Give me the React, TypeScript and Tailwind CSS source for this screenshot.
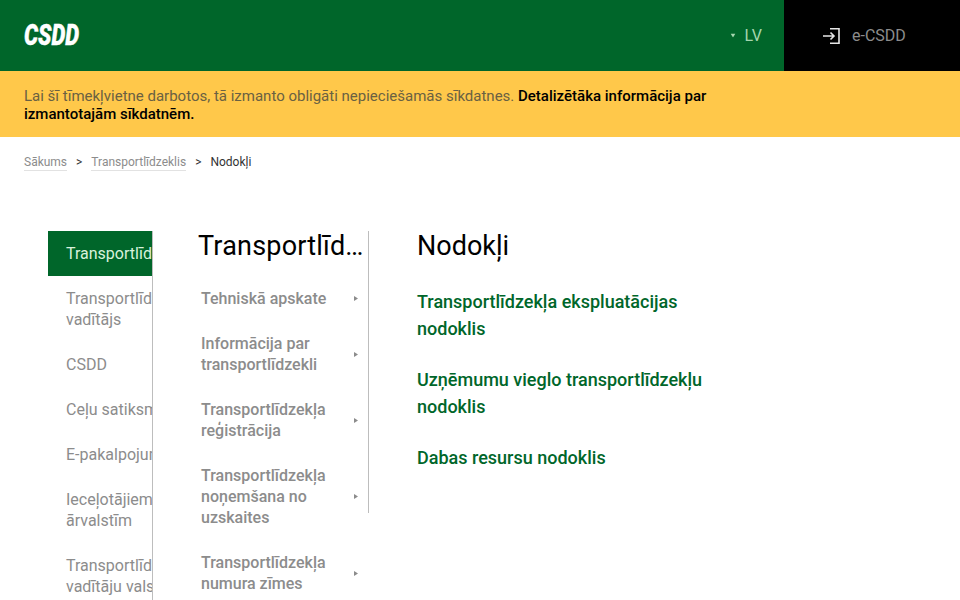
const mainNav = [
  { label: 'Transportlīdzeklis', active: true },
  { label: 'Transportlīdzekļa vadītājs' },
  { label: 'CSDD' },
  { label: 'Ceļu satiksme' },
  { label: 'E-pakalpojumi' },
  { label: 'Ieceļotājiem no ārvalstīm' },
  { label: 'Transportlīdzekļu vadītāju valsts' },
];

const subNav = [
  'Tehniskā apskate',
  'Informācija par transportlīdzekli',
  'Transportlīdzekļa reģistrācija',
  'Transportlīdzekļa noņemšana no uzskaites',
  'Transportlīdzekļa numura zīmes',
];

const links = [
  'Transportlīdzekļa ekspluatācijas nodoklis',
  'Uzņēmumu vieglo transportlīdzekļu nodoklis',
  'Dabas resursu nodoklis',
];

function Caret({ className }: { className: string }) {
  return (
    <svg className={className} viewBox="0 0 4 5" fill="currentColor">
      <path d="M0 0 L4 2.5 L0 5 Z" />
    </svg>
  );
}

export default function App() {
  return (
    <div className="h-screen overflow-hidden bg-white font-['Roboto',sans-serif]">
      <header className="flex h-[71px] bg-[#00662a]">
        <div className="flex flex-1 items-center justify-between pl-6">
          <span className="origin-left scale-x-[0.76] text-[29px] font-black italic leading-none text-white [-webkit-text-stroke:0.4px_white]">CSDD</span>
          <div className="mr-[22px] flex items-center gap-[10px] text-base text-[#a5d6ae]">
            <Caret className="h-[5px] w-[4px] rotate-90" />
            <span>LV</span>
          </div>
        </div>
        <div className="flex w-[176px] items-center bg-black pl-[39px]">
          <svg className="h-[16px] w-[17px] text-[#e6e6e6]" viewBox="0 0 17 16" fill="none" stroke="currentColor" strokeWidth="1.6">
            <path d="M7 .8 H16 V15.2 H7" />
            <path d="M0 8 H11 M7.5 4.5 L11 8 L7.5 11.5" />
          </svg>
          <span className="ml-[12px] text-base text-[#8c8c8c]">e-CSDD</span>
        </div>
      </header>

      <div className="h-[66px] bg-[#ffc84a] px-6 pt-[16px] text-[15px] leading-[18px] text-[#6a6142]">
        <p className="w-[720px]">
          Lai šī tīmekļvietne darbotos, tā izmanto obligāti nepieciešamās sīkdatnes.{' '}
          <a className="font-medium text-black">Detalizētāka informācija par izmantotajām sīkdatnēm.</a>
        </p>
      </div>

      <nav className="flex h-[94px] items-start gap-[9px] px-6 pt-[17px] text-xs leading-[16px] text-[#333]">
        <a className="border-b border-[#e2e2e2] text-[#8c8c8c]">Sākums</a>
        <span>&gt;</span>
        <a className="border-b border-[#e2e2e2] text-[#8c8c8c]">Transportlīdzeklis</a>
        <span>&gt;</span>
        <span>Nodokļi</span>
      </nav>

      <main className="flex items-start pl-12">
        <ul className="h-[400px] w-[105px] shrink-0 overflow-hidden border-r border-[#bdbdbd] text-base leading-[21px] text-[#8c8c8c]">
          {mainNav.map((item) => (
            <li
              key={item.label}
              className={`w-[180px] py-3 pl-[18px] ${item.active ? 'whitespace-nowrap bg-[#00662a] text-[#d9f2dc]' : ''}`}
            >
              {item.label}
            </li>
          ))}
        </ul>

        <div className="h-[282px] w-[216px] shrink-0 border-r border-[#bdbdbd]">
          <h2 className="truncate pl-[45px] pr-[4px] text-[27px] leading-[30px] tracking-[0.2px] text-black">Transportlīdzeklis</h2>
          <ul className="w-[216px] pt-[15px] text-base font-medium leading-[21px] text-[#8c8c8c]">
            {subNav.map((item) => (
              <li key={item} className="flex items-center justify-between py-3 pl-12 pr-[11px]">
                <span className="w-[136px]">{item}</span>
                <Caret className="h-[5px] w-[4px] text-[#8c8c8c]" />
              </li>
            ))}
          </ul>
        </div>

        <div className="ml-12 w-[300px]">
          <h1 className="text-[27px] leading-[30px] text-black">Nodokļi</h1>
          <div className="mt-[27px] flex flex-col gap-6 text-lg font-medium leading-[27px] text-[#00662a]">
            {links.map((link) => (
              <a key={link}>{link}</a>
            ))}
          </div>
        </div>
      </main>
    </div>
  );
}
